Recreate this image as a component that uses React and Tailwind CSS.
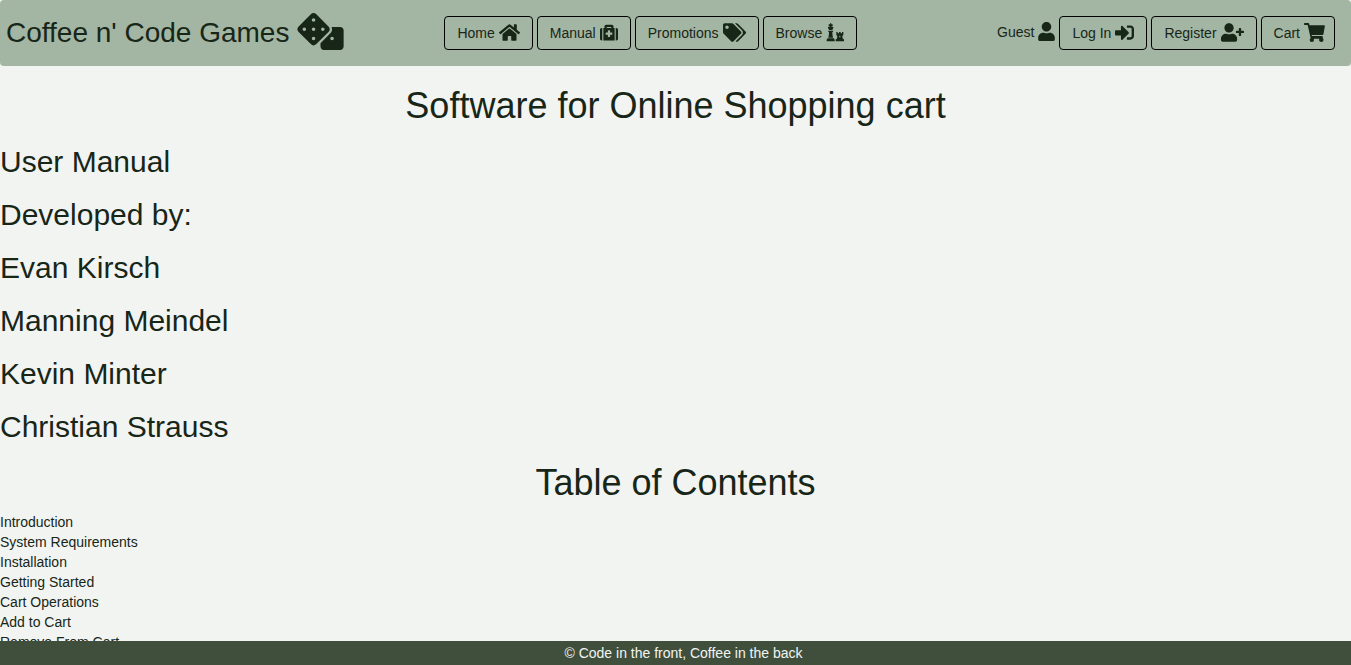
import {
  FaDice,
  FaHome,
  FaMedkit,
  FaTags,
  FaUser,
  FaSignInAlt,
  FaUserPlus,
} from "react-icons/fa";

const people = [
  "User Manual",
  "Developed by:",
  "Evan Kirsch",
  "Manning Meindel",
  "Kevin Minter",
  "Christian Strauss",
];

const contents = [
  "Introduction",
  "System Requirements",
  "Installation",
  "Getting Started",
  "Cart Operations",
  "Add to Cart",
  "Remove From Cart",
];

// A king and a rook standing side by side.
function ChessIcon(props) {
  return (
    <svg viewBox="0 0 54 57" fill="currentColor" {...props}>
      <path d="M12 1h4v3h4v5h-3v2h4q2 0 1 3l-3 7H9l-3-7q-1-3 1-3h4V9H8V4h4zM7 23h14v4h-2q0 10 2 17H7q2-7 2-17H7zM4 46h20v3h2v6H2v-6h2z" />
      <path
        fillRule="evenodd"
        d="M31 27h4v4h4v-4h5v4h4v-4h4v9l-3 3 1 8h2v2h2v6H29v-6h2v-2h2l1-8-3-3zm9 11v5h3v-5z"
      />
    </svg>
  );
}

function CartIcon(props) {
  return (
    <svg viewBox="0 0 63 57" fill="currentColor" {...props}>
      <path d="M2 0h11q2 0 2.500 2l1 5h44q2.500 0 2 3l-4 23q-.5 3-3 3H23l.5 3h30q3 0 3 3v4q2 2 2 5 0 6-6.500 6T45 51q0-2 1-4H29q1 2 1 4 0 6-6.500 6T17 51q0-3 3-5L11 6H2Q0 6 0 3T2 0z" />
    </svg>
  );
}

function NavButton({ label, icon: Icon, width }) {
  return (
    <a
      href="#"
      className="flex h-[34px] items-center gap-1 whitespace-nowrap rounded border border-black px-3"
    >
      {label}
      <Icon className={`mb-0.5 h-[19px] shrink-0 ${width}`} aria-hidden="true" />
    </a>
  );
}

export default function App() {
  return (
    <div className="min-h-screen bg-[#f2f4f2] font-['Liberation_Sans',Arial,sans-serif] text-sm leading-5 text-[#172617]">
      <nav className="grid grid-cols-[9fr_auto_10fr] items-center rounded bg-[#a3b5a3] py-4">
        <a
          href="#"
          className="flex h-[34px] items-center gap-2 whitespace-nowrap pl-1.5 text-[28px] leading-8"
        >
          Coffee n' Code Games
          <FaDice className="mb-1 h-[37px] w-[47px]" aria-hidden="true" />
        </a>
        <div className="flex gap-1">
          <NavButton label="Home" icon={FaHome} width="w-[21px]" />
          <NavButton label="Manual" icon={FaMedkit} width="w-[18px]" />
          <NavButton label="Promotions" icon={FaTags} width="w-[23px]" />
          <NavButton label="Browse" icon={ChessIcon} width="w-[18px]" />
        </div>
        <div className="flex justify-end gap-1 pr-4">
          <span className="flex h-8 items-center gap-1">
            Guest
            <FaUser className="mb-0.5 h-[19px] w-[17px]" aria-hidden="true" />
          </span>
          <NavButton label="Log In" icon={FaSignInAlt} width="w-[19px]" />
          <NavButton label="Register" icon={FaUserPlus} width="w-[23px]" />
          <NavButton label="Cart" icon={CartIcon} width="w-[21px] -mr-[3px]" />
        </div>
      </nav>

      <main className="pt-5 pb-6">
        <h1 className="text-center text-4xl leading-[39px]">
          Software for Online Shopping cart
        </h1>
        <div className="my-5 flex flex-col gap-5">
          {people.map((line) => (
            <h2 key={line} className="text-3xl leading-[33px]">
              {line}
            </h2>
          ))}
        </div>
        <h1 className="mb-2.5 text-center text-4xl leading-[39px]">
          Table of Contents
        </h1>
        <ul>
          {contents.map((item) => (
            <li key={item}>{item}</li>
          ))}
        </ul>
      </main>

      <footer className="fixed inset-x-0 bottom-0 h-6 bg-[#3f4f3c] pl-4 text-center leading-6 text-[#f2f4f2]">
        © Code in the front, Coffee in the back
      </footer>
    </div>
  );
}
